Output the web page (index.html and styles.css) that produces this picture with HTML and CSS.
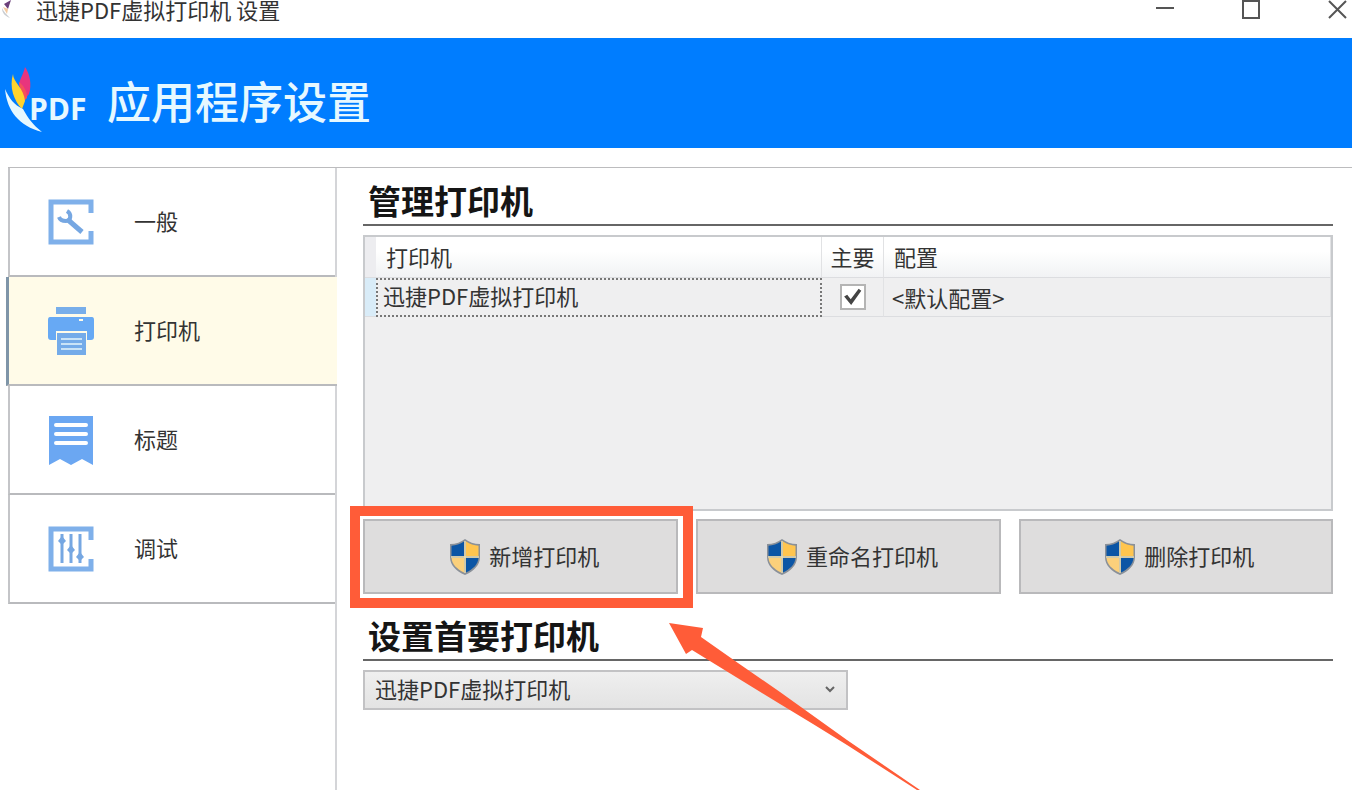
FILE: index.html
```
<!DOCTYPE html>
<html lang="zh-CN">
<head>
	<meta charset="utf-8"/>
	<title>迅捷PDF虚拟打印机 设置</title>
	<link rel="stylesheet" href="styles.css">
</head>
<body>
	<svg class="defs" width="0" height="0">
		<symbol id="shield" viewBox="0 0 30 36">
			<path fill="#8b9199" d="M15 0C11 3 6 5 0 5v13c0 8 6 14 15 18 9-4 15-10 15-18V5C24 5 19 3 15 0z"/>
			<path fill="#0b55a5" d="M14 2.500C10 5 6 6.500 1.500 6.800V17H14z"/>
			<path fill="#ffc54f" d="M16 2.500C20 5 24 6.500 28.500 6.800V17H16z"/>
			<path fill="#fbd07b" d="M1.500 19H14v14.500C7 30 2 25.500 1.500 19z"/>
			<path fill="#0b55a5" d="M28.500 19H16v14.500C23 30 28 25.500 28.500 19z"/>
			<path fill="none" stroke="#e8dcb0" stroke-width="1.500" d="M15 2v32M1 18h28"/>
		</symbol>
	</svg>
	<div class="window">
		<div class="titlebar">
			<svg class="appicon" width="12" height="18" viewBox="0 0 12 18">
				<path fill="#6b3f7a" d="M4 4 11 0 8 9z"/>
				<path fill="#f3c9a0" d="M3 7l5 2-1 5z"/>
				<path fill="#c9cdd2" d="M2 8c0 5 3 8 8 10-4-4-6-6-8-10z"/>
			</svg>
			<span class="title">迅捷PDF虚拟打印机 设置</span>
			<div class="controls">
				<button type="button" aria-label="最小化"><svg width="20" height="20" viewBox="0 0 20 20"><path d="M1 8h18"/></svg></button>
				<button type="button" aria-label="最大化"><svg width="20" height="20" viewBox="0 0 20 20"><path d="M2 1h16v17H2z"/></svg></button>
				<button type="button" aria-label="关闭"><svg width="20" height="20" viewBox="0 0 20 20"><path d="M2 1l17 17M19 1L2 18"/></svg></button>
			</div>
		</div>
		<header class="header">
			<div class="logo">
				<svg width="40" height="66" viewBox="0 0 40 66">
					<path fill="#e8357d" d="M20 0c5 7 7 18 4 27l-4 5-6-14c1-7 5-12 6-18z"/>
					<path fill="#f4505c" d="M14 15c5 4 8 9 8 16l-4 4z"/>
					<path fill="#ffd32e" d="M8 7c0 8 11 14 12 27l-3 8C9 34 4 20 8 7z"/>
					<path fill="#e6f8ff" d="M0 22c2 22 14 37 37 43-9-7-14-14-19-23C9 38 4 31 0 22z"/>
				</svg>
				<span>PDF</span>
			</div>
			<h1>应用程序设置</h1>
		</header>
		<div class="content">
			<nav class="sidebar">
				<a href="#general">
					<svg width="46" height="46" viewBox="0 0 46 46">
						<path class="line" d="M43 14V3H3v40h40V32"/>
						<path class="tool" d="M19 20l15 13"/>
						<path class="ring" d="M19 12c5 3 4 10-1 10-3 0-6-1-7-4"/>
					</svg>
					<span>一般</span>
				</a>
				<a href="#printer" class="active">
					<svg width="48" height="50" viewBox="0 0 46 50">
						<path fill="#78aeea" d="M8 1h30v7H8z"/>
						<path fill="#67a9f4" d="M2 11h42q2 0 2 3v17q0 3-3 3h-4v-9H8v9H3q-3 0-3-3V14q0-3 2-3z"/>
						<path fill="#fffbe8" d="M31 13h4v2h-4z"/>
						<path fill="#74abe9" d="M9 27h29v22H9z"/>
						<path stroke="#c9e3f7" stroke-width="2" d="M13 33h21M13 38h21M13 43h21"/>
					</svg>
					<span>打印机</span>
				</a>
				<a href="#title">
					<svg width="46" height="50" viewBox="0 0 46 50">
						<path fill="#6ba7f2" d="M1 1h44v49l-11-6-11 6-11-6-11 6z"/>
						<path stroke="#fff" stroke-width="4" stroke-linecap="round" d="M8 10h30M8 19h30M8 28h30"/>
					</svg>
					<span>标题</span>
				</a>
				<a href="#debug">
					<svg width="46" height="46" viewBox="0 0 46 46">
						<path class="line" d="M43 14V3H3v40h40V33"/>
						<path stroke="#76a7e2" stroke-width="3" d="M14 8v29M23 8v29M32 8v29"/>
						<path fill="#76a7e2" d="M10 15l4-5 4 5-4 4zM19 24l4-5 4 5-4 4zM28 31l4-5 4 5-4 4z"/>
					</svg>
					<span>调试</span>
				</a>
			</nav>
			<main class="main">
				<h2>管理打印机</h2>
				<div class="list">
					<table>
						<thead>
							<tr>
								<th class="mark"></th>
								<th class="name">打印机</th>
								<th class="primary">主要</th>
								<th>配置</th>
							</tr>
						</thead>
						<tbody>
							<tr>
								<td class="mark"></td>
								<td class="name">迅捷PDF虚拟打印机</td>
								<td class="primary"><input type="checkbox" aria-label="主要" checked></td>
								<td>&lt;默认配置&gt;</td>
							</tr>
						</tbody>
					</table>
				</div>
				<div class="buttons">
					<div class="add">
						<button type="button"><svg width="30" height="36"><use href="#shield"/></svg><span>新增打印机</span></button>
						<svg class="arrow" width="254" height="167" viewBox="0 0 254 167">
							<path fill="#ff5c38" d="M1 0L35 5 33 14 70 40 112 69 179 117 252 167 249 167 179 122 145 101 112 81 24 27 18 31z"/>
						</svg>
					</div>
					<button type="button"><svg width="30" height="36"><use href="#shield"/></svg><span>重命名打印机</span></button>
					<button type="button"><svg width="30" height="36"><use href="#shield"/></svg><span>删除打印机</span></button>
				</div>
				<h2 id="primary">设置首要打印机</h2>
				<div class="select">
					<select aria-labelledby="primary">
						<option>迅捷PDF虚拟打印机</option>
					</select>
					<svg width="12" height="8" viewBox="0 0 12 8"><path d="M2 2l4 4 4-4"/></svg>
				</div>
			</main>
		</div>
	</div>
</body>
</html>
```
FILE: styles.css
```
*{
	box-sizing: border-box;
}
body{
	margin: 0;
	color: #333;
	background-color: #fff;
	font: 22px/32px "Noto Sans CJK SC", sans-serif;
}
button, select{
	font: inherit;
	color: inherit;
}
.defs{
	position: absolute;
}
.window{
	min-height: 100vh;
	display: flex;
	flex-direction: column;
	overflow: hidden;
}
.titlebar{
	height: 38px;
	display: flex;
	align-items: flex-start;
	line-height: 19px;
}
.appicon{
	margin-right: 24px;
}
.controls{
	margin-left: auto;
	margin-right: 5px;
	display: flex;
	gap: 66px;
}
.controls button{
	width: 20px;
	height: 20px;
	padding: 0;
	border: 0;
	background: none;
}
.controls svg{
	display: block;
	fill: none;
	stroke: #555;
	stroke-width: 2;
}
.header{
	height: 110px;
	padding: 14px 5px 0;
	display: flex;
	align-items: center;
	color: #e6f8ff;
	background-color: #007dff;
}
.logo{
	width: 102px;
	display: flex;
	align-items: center;
	font: bold 30px/40px "Open Sans", sans-serif;
}
.logo svg{
	margin-right: -16px;
}
.logo span{
	padding-top: 18px;
}
h1{
	margin: 0;
	font-size: 44px;
	line-height: 64px;
	font-weight: 500;
}
.content{
	flex: 1;
	display: flex;
	margin: 19px 0 0 8px;
	border-top: 1px solid #bcbcbe;
}
.sidebar{
	width: 329px;
	flex-shrink: 0;
	border-right: 2px solid #d4d5d8;
}
.sidebar a{
	height: 109px;
	padding-left: 38px;
	display: flex;
	align-items: center;
	border-left: 2px solid #c4c5c8;
	border-bottom: 2px solid #b9babd;
	color: #333;
	text-decoration: none;
}
.sidebar svg{
	width: 46px;
	margin-right: 40px;
}
.sidebar span, .buttons span{
	padding-bottom: 4px;
}
.sidebar .active{
	margin: 0 -2px;
	border-left: 3px solid #7f95a8;
	padding-left: 39px;
	background-color: #fffbe8;
}
.line, .tool, .ring{
	fill: none;
	stroke: #7fb0ea;
	stroke-width: 5;
}
.tool, .ring{
	stroke: #76a7e2;
}
.ring{
	stroke-width: 4;
}
.main{
	flex: 1;
	padding: 12px 19px 0 26px;
}
h2{
	margin: 0 0 9px;
	padding: 0 0 4px 5px;
	font-size: 33px;
	line-height: 40px;
	color: #151515;
	border-bottom: 2px solid #666;
}
.list{
	height: 276px;
	border: 2px solid #c8cacd;
	background-color: #efeff0;
}
table{
	width: 100%;
	table-layout: fixed;
	border-collapse: separate;
	border-spacing: 0;
}
th, td{
	padding: 0 8px;
	text-align: left;
	font-weight: normal;
	border-right: 1px solid #e1e2e4;
	border-bottom: 1px solid #dcdde0;
}
th{
	padding: 0 10px 2px;
	line-height: 38px;
	background: linear-gradient(#fff 35%, #f1f2f4);
}
td{
	height: 39px;
	line-height: 36px;
}
.mark{
	width: 11px;
	padding: 0;
	background: #ededf0;
	border-right: 0;
}
td.mark{
	background: #d9ecf8;
}
.name{
	width: 446px;
}
td.name{
	padding: 0 5px 6px;
	line-height: 28px;
	border: 2px dotted #777;
}
.primary{
	width: 62px;
	padding-left: 0;
	padding-right: 0;
	text-align: center;
}
input{
	appearance: none;
	display: block;
	width: 26px;
	height: 26px;
	margin: 0 auto;
	border: 2px solid #b4b4b4;
	background-color: #fff;
}
input:checked::before{
	content: "";
	display: block;
	height: 22px;
	background-color: #444;
	clip-path: polygon(12% 48%, 26% 40%, 42% 60%, 78% 12%, 90% 22%, 44% 86%);
}
.buttons{
	display: grid;
	grid-template-columns: 315fr 304fr 314fr;
	gap: 18px;
	margin: 8px 0 21px;
}
.buttons button{
	width: 100%;
	height: 75px;
	padding: 0 0 0 8px;
	display: flex;
	align-items: center;
	justify-content: center;
	gap: 9px;
	border: 2px solid #b9b9bb;
	background-color: #dedddd;
}
.add{
	position: relative;
}
.add::after{
	content: "";
	position: absolute;
	top: -13px;
	right: -15px;
	bottom: -14px;
	left: -13px;
	border: 10px solid #ff5c38;
}
.arrow{
	position: absolute;
	top: 104px;
	left: calc(100% - 10px);
	z-index: 1;
}
.select{
	width: 50%;
	position: relative;
}
.select select{
	appearance: none;
	display: block;
	width: 100%;
	height: 40px;
	padding: 0 10px 4px;
	border: 2px solid #c2c2c4;
	border-radius: 0;
	background: linear-gradient(#efefef, #e3e3e3);
}
.select svg{
	position: absolute;
	top: 15px;
	right: 12px;
	fill: none;
	stroke: #666;
	stroke-width: 2;
}
```
